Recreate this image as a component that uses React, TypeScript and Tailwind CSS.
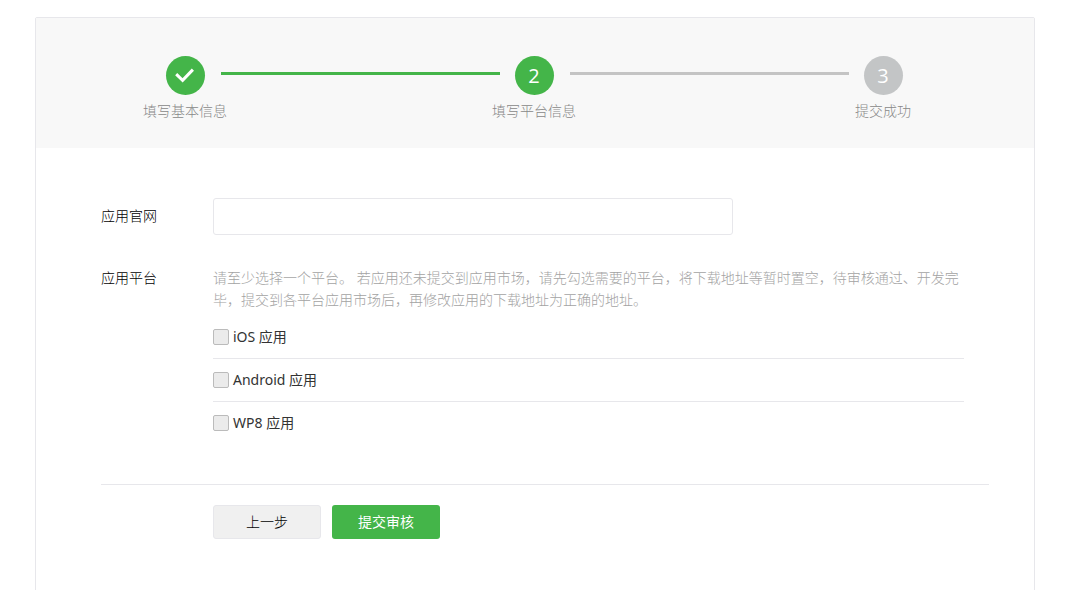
import { useState } from "react";
import clsx from "clsx";

type StepStatus = "done" | "current" | "pending";

interface StepProps {
  index: number;
  label: string;
  status: StepStatus;
}

const platforms = [
  { id: "ios", label: "iOS 应用" },
  { id: "android", label: "Android 应用" },
  { id: "wp8", label: "WP8 应用" },
];

function Step({ index, label, status }: StepProps) {
  return (
    <li className="flex w-[38px] flex-col items-center whitespace-nowrap">
      <span
        className={clsx(
          "flex size-[39px] shrink-0 items-center justify-center rounded-full font-['Open_Sans',sans-serif] text-xl font-normal text-white",
          status === "pending" ? "bg-[#c3c5c6]" : "bg-[#44b549]"
        )}
      >
        {status === "done" ? (
          <svg width="20" height="16" viewBox="0 0 20 16" fill="none">
            <path d="M1.2 6.2 L7.6 12.4 L17.9 1.6" stroke="#fff" strokeWidth="3" />
          </svg>
        ) : (
          index
        )}
      </span>
      <span className="mt-1.5 text-sm text-[#888]">{label}</span>
    </li>
  );
}

function StepLine({ active }: { active?: boolean }) {
  return (
    <li
      aria-hidden="true"
      className={clsx(
        "mt-4 mr-[15px] ml-[17px] h-[3px] flex-1",
        active ? "bg-[#44b549]" : "bg-[#c4c4c4]"
      )}
    />
  );
}

export default function App() {
  const [site, setSite] = useState("");
  const [selected, setSelected] = useState<string[]>([]);

  const toggle = (id: string) => {
    setSelected((prev) =>
      prev.includes(id) ? prev.filter((item) => item !== id) : [...prev, id]
    );
  };

  return (
    <main className="min-h-screen bg-white pt-[17px] pr-[54px] pl-[35px] font-['Noto_Sans','Noto_Sans_CJK_SC',sans-serif] text-sm font-light text-black">
      <div className="rounded-t-xs border border-[#e7e7eb]">
        {/* Steps */}
        <ol className="flex items-start bg-[#f8f8f8] pt-[38px] pr-[132px] pb-[27px] pl-[130px]">
          <Step index={1} label="填写基本信息" status="done" />
          <StepLine active />
          <Step index={2} label="填写平台信息" status="current" />
          <StepLine />
          <Step index={3} label="提交成功" status="pending" />
        </ol>

        <form
          className="pt-[50px] pr-[45px] pb-16 pl-[65px]"
          onSubmit={(e) => e.preventDefault()}
        >
          {/* Website */}
          <div className="flex">
            <label htmlFor="site" className="w-28 shrink-0 leading-[36px]">
              应用官网
            </label>
            <input
              id="site"
              type="text"
              value={site}
              onChange={(e) => setSite(e.target.value)}
              className="h-[37px] w-full max-w-[520px] rounded-[3px] border border-[#e7e7eb] bg-white px-2.5 outline-none"
            />
          </div>

          {/* Platforms */}
          <div
            role="group"
            aria-labelledby="platform-label"
            className="mt-8 flex"
          >
            <span id="platform-label" className="w-28 shrink-0 leading-[22px]">
              应用平台
            </span>
            <div className="max-w-[751px] flex-1">
              <p className="leading-[22px] text-[#a3a3a3]">
                请至少选择一个平台。 若应用还未提交到应用市场，请先勾选需要的平台，将下载地址等暂时置空，待审核通过、开发完毕，提交到各平台应用市场后，再修改应用的下载地址为正确的地址。
              </p>
              <ul className="mt-[5px] divide-y divide-[#e7e7eb]">
                {platforms.map(({ id, label }) => (
                  <li key={id}>
                    <label className="flex h-[42px] items-center gap-1 font-normal text-[#333]">
                      <input
                        type="checkbox"
                        checked={selected.includes(id)}
                        onChange={() => toggle(id)}
                        className="size-4 appearance-none rounded-xs border border-[#bbb] bg-[#ebebeb] checked:bg-[#44b549]"
                      />
                      {label}
                    </label>
                  </li>
                ))}
              </ul>
            </div>
          </div>

          {/* Actions */}
          <div className="mt-10 flex gap-[11px] border-t border-[#e7e7eb] pt-5 pl-28">
            <button
              type="button"
              className="h-[34px] w-[108px] rounded-[3px] border border-[#e7e7eb] bg-[#f0f0f0]"
            >
              上一步
            </button>
            <button
              type="submit"
              className="h-[34px] w-[108px] rounded-[3px] bg-[#44b549] font-normal text-white"
            >
              提交审核
            </button>
          </div>
        </form>
      </div>
    </main>
  );
}
